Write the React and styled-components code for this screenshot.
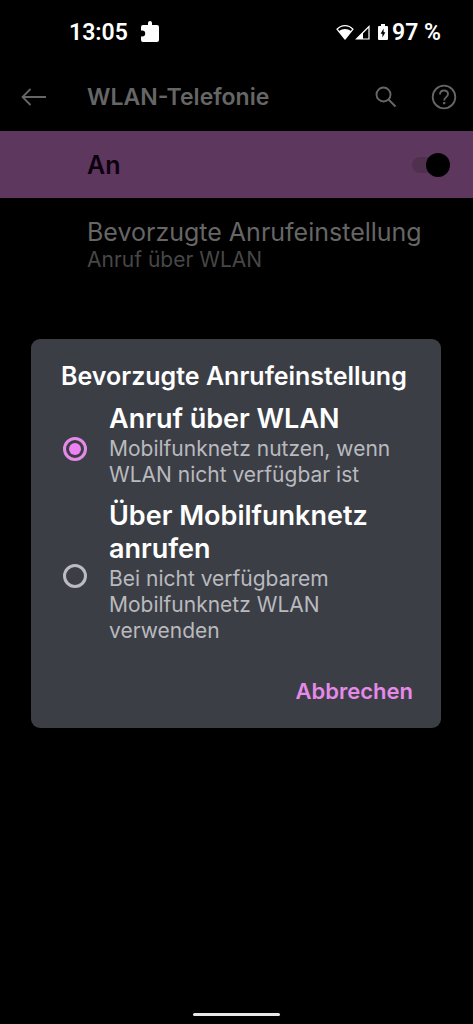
import React, { useState } from 'react';
import styled, { createGlobalStyle } from 'styled-components';

const GlobalStyle = createGlobalStyle`
  * {
    box-sizing: border-box;
  }
  body {
    margin: 0;
    background: #000;
    font-family: Inter, Roboto, sans-serif;
  }
  h1, h2, p {
    margin: 0;
  }
  button {
    padding: 0;
    border: none;
    background: none;
    color: inherit;
    font-family: inherit;
    cursor: pointer;
  }
  svg {
    display: block;
  }
`;

const Screen = styled.div`
  min-height: 100vh;
  display: flex;
  flex-direction: column;
  background: #000;
`;

const StatusBar = styled.div`
  height: 64px;
  padding: 0 32px 0 69px;
  display: flex;
  align-items: center;
  justify-content: space-between;
  color: #fff;
  font-family: Roboto, sans-serif;
  font-size: 23px;
  font-weight: 600;
`;

const StatusGroup = styled.div`
  display: flex;
  align-items: center;
  gap: ${props => props.$gap};
`;

const AppBar = styled.header`
  height: 67px;
  padding: 0 16px 2px 20px;
  display: flex;
  align-items: center;
  color: #666;
  h1 {
    flex: 1;
    margin-left: 39px;
    font-size: 23px;
    line-height: 28px;
    font-weight: 600;
  }
`;

const Actions = styled.div`
  display: flex;
  align-items: center;
  gap: 34px;
`;

const SwitchBar = styled.label`
  height: 67px;
  padding: 0 23px 0 87px;
  display: flex;
  align-items: center;
  justify-content: space-between;
  background: #5e375e;
  color: #0c000e;
  font-size: 25px;
  font-weight: 600;
`;

const Switch = styled.input`
  appearance: none;
  display: flex;
  align-items: center;
  justify-content: flex-end;
  width: 38px;
  height: 16px;
  margin: 0;
  border-radius: 8px;
  background: #50304f;
  &::after {
    content: '';
    width: 24px;
    height: 24px;
    flex: none;
    border-radius: 50%;
    background: #000;
  }
  &:not(:checked) {
    justify-content: flex-start;
  }
`;

const Preference = styled.button`
  padding: 20px 24px 20px 87px;
  text-align: left;
  color: #666;
  font-size: 25px;
  line-height: 28px;
`;

const PreferenceValue = styled.div`
  color: #474747;
  font-size: 21px;
`;

const Spacer = styled.div`
  flex: 1;
`;

const NavHandle = styled.div`
  width: 87px;
  height: 3px;
  margin: 0 auto 8px;
  border-radius: 2px;
  background: #e8e8e8;
`;

const Overlay = styled.div`
  position: fixed;
  inset: 0;
  padding: 43px 32px 0 31px;
  display: flex;
  align-items: center;
  justify-content: center;
`;

const Dialog = styled.form`
  width: 100%;
  max-width: 480px;
  padding: 22px 28px 22px 30px;
  border-radius: 9px;
  background: #3c3e46;
  h2 {
    color: #fff;
    font-size: 25px;
    line-height: 30px;
    font-weight: 600;
    white-space: nowrap;
  }
`;

const Options = styled.div`
  padding-top: 11px;
  display: grid;
  gap: 3px;
`;

const Option = styled.label`
  padding-left: 2px;
  display: flex;
  align-items: center;
  gap: 22px;
  cursor: pointer;
`;

const Radio = styled.input`
  appearance: none;
  flex: none;
  display: grid;
  place-items: center;
  width: 24px;
  height: 24px;
  margin: 0;
  border: 3px solid #bcbcc0;
  border-radius: 50%;
  &:checked {
    border-color: #e58ae8;
  }
  &:checked::after {
    content: '';
    width: 12px;
    height: 12px;
    border-radius: 50%;
    background: #ee82f2;
  }
`;

const OptionBody = styled.div`
  padding-bottom: 8px;
`;

const OptionTitle = styled.div`
  margin-bottom: 1px;
  color: #fff;
  font-size: 27px;
  line-height: 33px;
  font-weight: 600;
`;

const OptionText = styled.p`
  color: #b9babe;
  font-size: 21px;
  line-height: 26px;
`;

const DialogActions = styled.div`
  padding-top: 24px;
  display: flex;
  justify-content: flex-end;
`;

const CancelButton = styled.button`
  color: #e58ae8;
  font-size: 22px;
  line-height: 30px;
  font-weight: 600;
`;

const PuzzleIcon = () => (
  <svg width="20" height="24" viewBox="0 0 20 24" fill="#fff">
    <path d="M3 5h5V3a2 2 0 0 1 4 0v2h5a2 2 0 0 1 2 2v13a2 2 0 0 1-2 2H3a2 2 0 0 1-2-2v-3.500h1.200a3 3 0 0 0 0-6H1V7a2 2 0 0 1 2-2z" />
  </svg>
);

const WifiIcon = () => (
  <svg width="18" height="16" viewBox="0 0 18 16">
    <path d="M1 5.2C5.5 0.4 12.5 0.4 17 5.2L9 15z" fill="none" stroke="#fff" strokeWidth="1.300" strokeLinejoin="round" />
    <path d="M2.800 7.200c4-2.800 8.400-2.800 12.400 0L9 15z" fill="#fff" />
  </svg>
);

const SignalIcon = () => (
  <svg width="15" height="15" viewBox="0 0 15 15">
    <path d="M14 1.500V14H1.500z" fill="none" stroke="#fff" strokeWidth="1.200" />
    <path d="M8 7.500V14H1.500z" fill="#fff" />
  </svg>
);

const BatteryIcon = () => (
  <svg width="10" height="16" viewBox="0 0 10 16">
    <path d="M3 0h4v2h2a1 1 0 0 1 1 1v12a1 1 0 0 1-1 1H1a1 1 0 0 1-1-1V3a1 1 0 0 1 1-1h2z" fill="#fff" />
    <path d="M5.600 4.500v3.700h1.800L4.400 13.500V9.800H2.600z" fill="#000" />
  </svg>
);

const BackIcon = () => (
  <svg width="28" height="20" viewBox="0 0 28 20" fill="none" stroke="currentColor" strokeWidth="1.800">
    <path d="M26 10H2.500M10.500 2L2.500 10l8 8" />
  </svg>
);

const SearchIcon = () => (
  <svg width="22" height="22" viewBox="0 0 22 22" fill="none" stroke="currentColor" strokeWidth="1.900">
    <circle cx="8.500" cy="8.500" r="7" />
    <path d="M13.500 13.500l7 7" />
  </svg>
);

const HelpIcon = () => (
  <svg width="26" height="26" viewBox="0 0 26 26" fill="none" stroke="currentColor" strokeWidth="1.800">
    <circle cx="13" cy="13" r="11.300" />
    <path d="M9 10.500c0-2.500 1.700-4 4-4s4 1.500 4 3.700c0 2.800-3.800 3.200-3.800 6.200" />
    <path d="M13.200 18v2.200" strokeWidth="2.200" />
  </svg>
);

const options = [
  {
    id: 'wlan',
    title: 'Anruf über WLAN',
    text: 'Mobilfunknetz nutzen, wenn WLAN nicht verfügbar ist',
  },
  {
    id: 'mobile',
    title: 'Über Mobilfunknetz anrufen',
    text: 'Bei nicht verfügbarem Mobilfunknetz WLAN verwenden',
  },
];

const App = () => {
  const [enabled, setEnabled] = useState(true);
  const [open, setOpen] = useState(true);
  const [selected, setSelected] = useState('wlan');

  return (
    <>
      <GlobalStyle />
      <Screen>
        <StatusBar>
          <StatusGroup $gap="12px">
            <span>13:05</span>
            <PuzzleIcon />
          </StatusGroup>
          <StatusGroup $gap="8px">
            <StatusGroup $gap="1px">
              <WifiIcon />
              <SignalIcon />
            </StatusGroup>
            <StatusGroup $gap="4px">
              <BatteryIcon />
              <span>97 %</span>
            </StatusGroup>
          </StatusGroup>
        </StatusBar>

        <AppBar>
          <button type="button" aria-label="Zurück"><BackIcon /></button>
          <h1>WLAN-Telefonie</h1>
          <Actions>
            <button type="button" aria-label="Suchen"><SearchIcon /></button>
            <button type="button" aria-label="Hilfe"><HelpIcon /></button>
          </Actions>
        </AppBar>

        <SwitchBar>
          An
          <Switch
            type="checkbox"
            role="switch"
            checked={enabled}
            onChange={e => setEnabled(e.target.checked)}
          />
        </SwitchBar>

        <Preference type="button" onClick={() => setOpen(true)}>
          Bevorzugte Anrufeinstellung
          <PreferenceValue>{options.find(o => o.id === selected).title}</PreferenceValue>
        </Preference>

        <Spacer />
        <NavHandle />
      </Screen>

      {open && (
        <Overlay>
          <Dialog role="dialog" aria-labelledby="dialog-title">
            <h2 id="dialog-title">Bevorzugte Anrufeinstellung</h2>
            <Options role="radiogroup" aria-labelledby="dialog-title">
              {options.map(option => (
                <Option key={option.id}>
                  <Radio
                    type="radio"
                    name="call-preference"
                    value={option.id}
                    checked={selected === option.id}
                    onChange={() => setSelected(option.id)}
                  />
                  <OptionBody>
                    <OptionTitle>{option.title}</OptionTitle>
                    <OptionText>{option.text}</OptionText>
                  </OptionBody>
                </Option>
              ))}
            </Options>
            <DialogActions>
              <CancelButton type="button" onClick={() => setOpen(false)}>Abbrechen</CancelButton>
            </DialogActions>
          </Dialog>
        </Overlay>
      )}
    </>
  );
};

export default App;
